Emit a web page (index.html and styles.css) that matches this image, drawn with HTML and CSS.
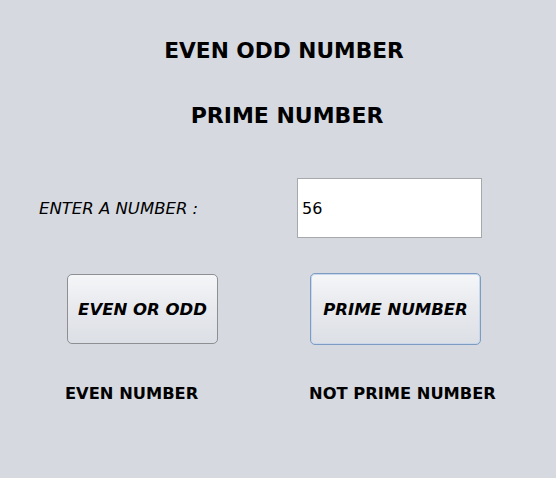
FILE: index.html
```html
<!DOCTYPE html>
<html>
<head>
<meta charset="utf-8">
<link rel="stylesheet" href="styles.css">
</head>
<body>
<main class="frame">
  <h1 class="title title-one">EVEN ODD NUMBER</h1>
  <h2 class="title title-two">PRIME NUMBER</h2>
  <div class="row input-row">
    <label class="prompt" for="num">ENTER A NUMBER :</label>
    <input class="field" id="num" type="text" value="56">
  </div>
  <div class="row button-row">
    <button class="btn btn-even">EVEN OR ODD</button>
    <button class="btn btn-prime">PRIME NUMBER</button>
  </div>
  <div class="row result-row">
    <span class="result result-even">EVEN NUMBER</span>
    <span class="result result-prime">NOT PRIME NUMBER</span>
  </div>
</main>
</body>
</html>
```
FILE: styles.css
```css
html, body {
  margin: 0;
  padding: 0;
  background: #d6d9df;
}
.frame {
  width: 556px;
  height: 478px;
  display: flex;
  flex-direction: column;
  font-family: "DejaVu Sans", sans-serif;
  color: #000;
}
.title {
  margin: 0;
  font-weight: bold;
  line-height: 24px;
  text-align: center;
}
.title-one {
  font-size: 21.7px;
  margin-top: 39px;
  padding-left: 12px;
}
.title-two {
  font-size: 22px;
  margin-top: 41px;
  padding-left: 18px;
}
.row {
  display: flex;
  align-items: center;
}
.input-row {
  margin-top: 50px;
  padding-left: 39px;
}
.prompt {
  width: 258px;
  font-size: 16.5px;
  font-style: italic;
}
.field {
  box-sizing: border-box;
  width: 185px;
  height: 60px;
  margin: 0;
  padding: 0 4px;
  border: 1px solid #a6a8ab;
  background: #fff;
  font-family: inherit;
  font-size: 16px;
  color: #000;
  outline: none;
}
.button-row {
  margin-top: 35px;
  align-items: flex-start;
}
.btn {
  box-sizing: border-box;
  margin: 0;
  padding: 0;
  border-radius: 5px;
  font-family: inherit;
  font-size: 16.5px;
  font-weight: bold;
  font-style: italic;
  color: #000;
  background: linear-gradient(#f5f6f8 0%, #e8eaee 45%, #dcdfe5 100%);
  cursor: pointer;
}
.btn-even {
  width: 151px;
  height: 70px;
  margin-left: 67px;
  margin-top: 1px;
  border: 1px solid #8d8f93;
}
.btn-prime {
  width: 171px;
  height: 72px;
  margin-left: 92px;
  border: 1px solid #7d9cc4;
  box-shadow: inset 0 0 0 1px #c9d7ea;
}
.result-row {
  margin-top: 39px;
}
.result {
  font-size: 16.3px;
  font-weight: bold;
}
.result-even {
  margin-left: 65px;
  width: 244px;
}
```
